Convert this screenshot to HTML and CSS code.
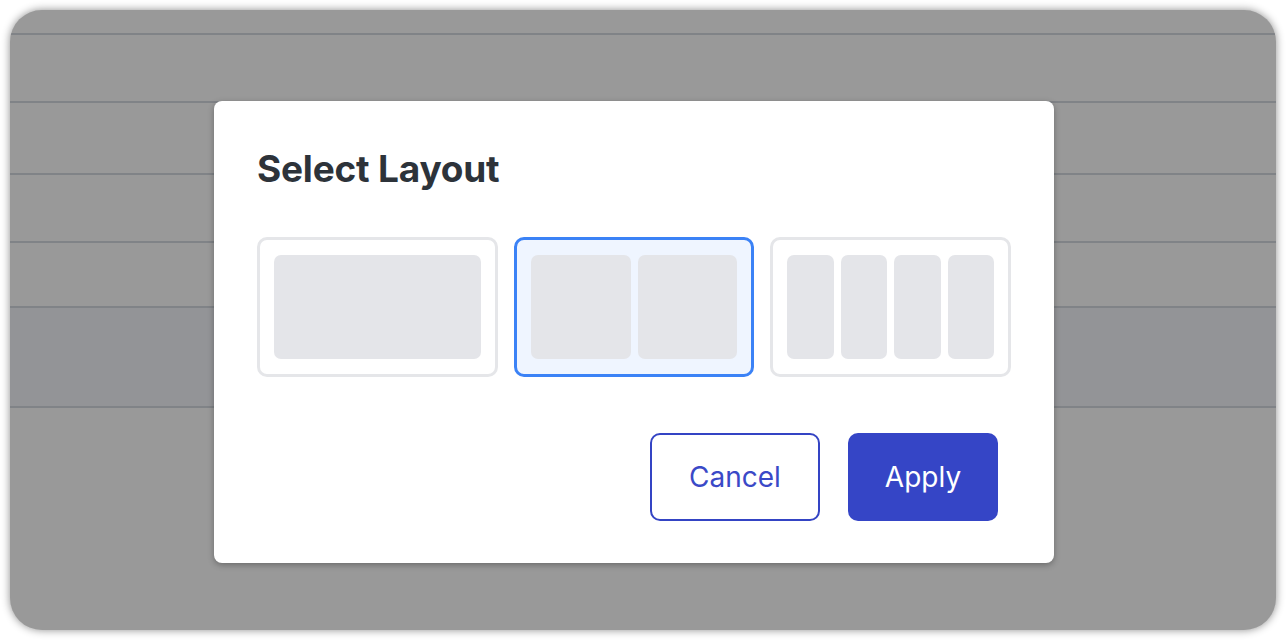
FILE: index.html
```html
<!DOCTYPE html>
<html>
<head>
  <meta charset="utf-8">
  <title>Select Layout</title>
  <link rel="stylesheet" href="styles.css">
</head>
<body>
  <div class="screen">
    <div class="row row-a"></div>
    <div class="row row-b"></div>
    <div class="row row-c"></div>
    <div class="row row-d"></div>
    <div class="row row-e"></div>
    <div class="row row-band"></div>
    <div class="row-rest"></div>

    <div class="modal">
      <h2 class="modal-title">Select Layout</h2>

      <div class="layouts">
        <div class="layout-option">
          <div class="pane"></div>
        </div>
        <div class="layout-option selected">
          <div class="pane"></div>
          <div class="pane"></div>
        </div>
        <div class="layout-option">
          <div class="pane"></div>
          <div class="pane"></div>
          <div class="pane"></div>
          <div class="pane"></div>
        </div>
      </div>

      <div class="actions">
        <button class="btn btn-outline">Cancel</button>
        <button class="btn btn-primary">Apply</button>
      </div>
    </div>
  </div>
</body>
</html>
```

FILE: styles.css
```css
html, body {
  margin: 0;
  padding: 0;
  background: #ffffff;
  font-family: Inter, "Noto Sans", sans-serif;
}

body {
  padding: 10px;
  height: 640px;
  box-sizing: border-box;
}

.screen {
  position: relative;
  height: 620px;
  background-color: #999999;
  border-radius: 32px;
  overflow: hidden;
  box-shadow: 0 0 9px rgba(0, 0, 0, 0.45);
  display: flex;
  flex-direction: column;
}

.row {
  border-bottom: 2px solid #808387;
  flex-shrink: 0;
}

.row-a { height: 23px; }
.row-b { height: 66px; }
.row-c { height: 70px; }
.row-d { height: 66px; }
.row-e { height: 63px; }

.row-band {
  height: 98px;
  background-color: #939497;
}

.row-rest {
  flex: 1;
}

/* fenetre modale */
.modal {
  position: absolute;
  left: 204px;
  top: 91px;
  width: 840px;
  box-sizing: border-box;
  padding: 46px 43px 42px;
  background: #ffffff;
  border-radius: 8px;
  box-shadow: 0 2px 6px rgba(0, 0, 0, 0.3);
}

.modal-title {
  margin: 0;
  font-size: 37px;
  line-height: 44px;
  font-weight: 700;
  color: #2d333a;
  letter-spacing: -0.2px;
}

.layouts {
  display: flex;
  gap: 16px;
  margin-top: 46px;
}

.layout-option {
  flex: 1;
  height: 140px;
  box-sizing: border-box;
  border: 3px solid #e5e6e9;
  border-radius: 10px;
  padding: 15px 14px;
  display: flex;
  gap: 7px;
  background: #ffffff;
}

.layout-option.selected {
  border-color: #3b82f6;
  background-color: #eff5ff;
}

.pane {
  flex: 1;
  background-color: #e4e5e9;
  border-radius: 7px;
}

.actions {
  display: flex;
  justify-content: flex-end;
  gap: 28px;
  margin-top: 56px;
  padding-right: 13px;
}

.btn {
  height: 88px;
  border-radius: 10px;
  font-family: Inter, "Noto Sans", sans-serif;
  font-size: 28px;
  font-weight: 400;
  cursor: pointer;
}

.btn-outline {
  width: 170px;
  background: #ffffff;
  border: 2px solid #3444c4;
  color: #3a49c7;
}

.btn-primary {
  width: 150px;
  background-color: #3545c6;
  border: none;
  color: #ffffff;
}
```
